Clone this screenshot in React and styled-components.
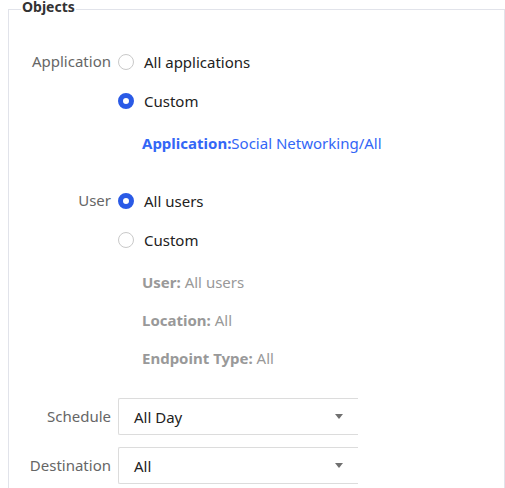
import React from 'react'
import styled, {createGlobalStyle} from 'styled-components'

const GlobalStyle = createGlobalStyle`
  body{
    margin: 0;
    background: #fff;
    font-family: "Noto Sans", "Open Sans", sans-serif;
  }
`

export default function App() {
  return (
    <>
      <GlobalStyle/>
      <Fieldset>
        <Legend>Objects</Legend>
        <Body>
          <Item>
            <Label>Application</Label>
            <Control>
              <RadioRow><Radio/>All applications</RadioRow>
              <RadioRow><Radio checked/>Custom</RadioRow>
              <Detail first link>
                <b>Application:</b>Social Networking/All
              </Detail>
            </Control>
          </Item>

          <Item space={18}>
            <Label>User</Label>
            <Control>
              <RadioRow><Radio checked/>All users</RadioRow>
              <RadioRow><Radio/>Custom</RadioRow>
              <Detail first short><b>User:</b> All users</Detail>
              <Detail short><b>Location:</b> All</Detail>
              <Detail short><b>Endpoint Type:</b> All</Detail>
            </Control>
          </Item>

          <Item space={21}>
            <Label select>Schedule</Label>
            <Select>
              <span>All Day</span>
              <Caret/>
            </Select>
          </Item>

          <Item space={12}>
            <Label select>Destination</Label>
            <Select>
              <span>All</span>
              <Caret/>
            </Select>
          </Item>
        </Body>
      </Fieldset>
    </>
  )
}

const Fieldset = styled.fieldset`
  box-sizing: border-box;
  width: 497px;
  margin: 0 0 0 8px;
  padding: 0 0 40px;
  border: 1px solid #e1e3ea;
  min-width: 0;
`
const Legend = styled.legend`
  margin-left: 12px;
  padding: 0 1px 5px;
  font-size: 14px;
  line-height: 14px;
  font-weight: 700;
  color: #333;
`
const Body = styled.div`
  padding-top: 23px;
`
const Item = styled.div`
  display: grid;
  grid-template-columns: 109px 1fr;
  margin-top: ${p => p.space || 0}px;
`
const Label = styled.div`
  box-sizing: border-box;
  padding-right: 7px;
  text-align: right;
  font-size: 15px;
  color: #666;
  line-height: ${p => p.select ? '37px' : '39px'};
`
const Control = styled.div`
  display: flex;
  flex-direction: column;
`
const RadioRow = styled.label`
  display: flex;
  align-items: center;
  gap: 10px;
  height: 39px;
  font-size: 15px;
  color: #222;
`
const Radio = styled.span`
  box-sizing: border-box;
  width: 16px;
  height: 16px;
  border-radius: 50%;
  background: #fff;
  border: ${p => p.checked ? '5px solid #2a5ae6' : '1px solid #c9c9c9'};
`
const Detail = styled.div`
  margin-top: ${p => p.first ? (p.short ? 4 : 4) : 0}px;
  padding-left: 24px;
  height: ${p => p.short ? 38 : 39}px;
  line-height: ${p => p.short ? 38 : 39}px;
  font-size: 15px;
  color: ${p => p.link ? '#3366f6' : '#999'};

  b{
    font-weight: 700;
  }
`
const Select = styled.div`
  box-sizing: border-box;
  width: 240px;
  height: 37px;
  display: flex;
  align-items: center;
  justify-content: space-between;
  padding: 0 15px 0 15px;
  border: 1px solid #dcdcdc;
  border-right: none;
  border-radius: 2px 0 0 2px;
  font-size: 15px;
  color: #222;
`
const Caret = styled.span`
  width: 0;
  height: 0;
  border-left: 4px solid transparent;
  border-right: 4px solid transparent;
  border-top: 5px solid #707070;
`
